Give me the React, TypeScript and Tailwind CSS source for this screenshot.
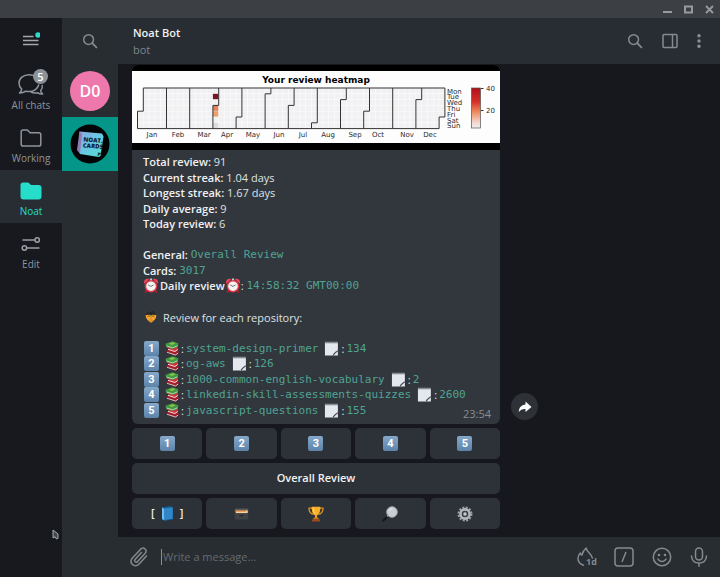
import type { ReactNode } from "react";

type EmojiProps = { className?: string };

function MenuIcon() {
  return (
    <svg width="18" height="16" viewBox="0 0 18 16" fill="none" aria-hidden="true">
      <path d="M1 5.5h10.5M1 9.5h15.5M1 13.5h15.5" stroke="#a2a7ab" strokeWidth="1.4" />
      <circle cx="16" cy="4" r="2.7" fill="#2bdccb" stroke="none" />
    </svg>
  );
}

function SearchIcon() {
  return (
    <svg width="16" height="16" viewBox="0 0 16 16" fill="none" stroke="#858a8e" strokeWidth="1.5" strokeLinecap="round" aria-hidden="true">
      <circle cx="6.6" cy="6.6" r="4.9" />
      <path d="M10.2 10.2l4.2 4.2" strokeWidth="1.8" />
    </svg>
  );
}

function ChatsIcon() {
  return (
    <svg width="26" height="22" viewBox="0 0 26 22" fill="none" stroke="#8f9499" strokeWidth="1.5" strokeLinejoin="round" strokeLinecap="round" aria-hidden="true">
      <path d="M15 1.4C13.7.9 12.3.8 10.9.8 5.400.8 1 4.300 1 9c0 2.400 1 4.500 2.700 6.100-.1 1.400-.9 2.800-2.200 4 2.200.1 4.500-.6 6.200-1.900 1.100.3 2.300.400 3.400.400 4.400 0 8.500-2.600 9.600-6.600" />
      <path d="M24.200 11.500c.5 1.800-.2 3.700-1.500 5.100 0 1.300.7 2.400 2 3.400-1.900.3-3.700-.2-5.200-1.300-2.200.6-4.500.5-6.300-.500" />
    </svg>
  );
}

function FolderIcon({ filled = false }: { filled?: boolean }) {
  return filled ? (
    <svg width="22" height="18" viewBox="0 0 22 18" fill="#26dccb" aria-hidden="true">
      <path d="M.5 3A2.500 2.500 0 0 1 3 .5h4.500c.9 0 1.500.4 2 1L11 3h7.500a3 3 0 0 1 3 3v8.500a3 3 0 0 1-3 3h-15a3 3 0 0 1-3-3z" />
    </svg>
  ) : (
    <svg width="22" height="18" viewBox="0 0 22 18" fill="none" stroke="#8f9499" strokeWidth="1.5" strokeLinejoin="round" aria-hidden="true">
      <path d="M1.200 2.800C1.200 1.700 2 1 3 1h4.400l2.700 2.800h8.700c1.200 0 2 .8 2 2v9.400c0 1.100-.8 1.900-2 1.900H3.200c-1.200 0-2-.8-2-1.900z" />
    </svg>
  );
}

function SlidersIcon() {
  return (
    <svg width="20" height="16" viewBox="0 0 20 16" fill="none" stroke="#9a9fa4" strokeWidth="1.500" aria-hidden="true">
      <path d="M1.500 4h12.500M6 12h12.500" />
      <circle cx="16.200" cy="4" r="2.200" />
      <circle cx="3.400" cy="12" r="2.200" />
    </svg>
  );
}

function PanelIcon() {
  return (
    <svg width="16" height="16" viewBox="0 0 16 16" fill="none" stroke="#858a8e" strokeWidth="1.500" aria-hidden="true">
      <rect x="1" y="1.500" width="14" height="13" rx="1" />
      <path d="M10.500 1.500v13" />
    </svg>
  );
}

function DotsIcon() {
  return (
    <svg width="4" height="16" viewBox="0 0 4 16" fill="#8b9094" aria-hidden="true">
      <circle cx="2" cy="2.700" r="1.700" />
      <circle cx="2" cy="8" r="1.700" />
      <circle cx="2" cy="13.300" r="1.700" />
    </svg>
  );
}

function ClipIcon() {
  return (
    <svg width="18" height="20" viewBox="0 0 18 20" fill="none" stroke="#858a8e" strokeWidth="1.500" strokeLinecap="round" aria-hidden="true">
      <path d="M11.500 5.500l-6.300 6.800c-1.600 1.800.7 4 2.400 2.300l7.400-8c3-3.500-1.400-7.400-4.600-4.200L2.600 10.700c-4.400 5 1.900 11 6.500 6.300l7.400-8" />
    </svg>
  );
}

function StreakIcon() {
  return (
    <svg width="20" height="20" viewBox="0 0 20 20" className="overflow-visible" fill="none" stroke="#858a8e" strokeWidth="1.500" strokeLinecap="round" strokeLinejoin="round" aria-hidden="true">
      <path d="M7.500 18.200C4.200 17.200 2 14.500 2 11.200c0-2.200 1-3.800 2.300-5.200.3 1 .7 1.700 1.500 2.200C6.600 5.500 7.600 3 10.200 1c.4 2.500 1.500 3.600 3 5 1.500 1.500 2.800 3 3.200 5" />
      <text x="10" y="18" fontFamily="Open Sans, sans-serif" fontSize="9" fontWeight="700" fill="#858a8e" stroke="none">1d</text>
    </svg>
  );
}

function CommandIcon() {
  return (
    <svg width="20" height="20" viewBox="0 0 20 20" fill="none" stroke="#858a8e" strokeWidth="1.500" strokeLinecap="round" aria-hidden="true">
      <rect x="1" y="1" width="18" height="18" rx="3" />
      <path d="M11.800 5.500L8.200 14.500" />
    </svg>
  );
}

function SmileIcon() {
  return (
    <svg width="20" height="20" viewBox="0 0 20 20" fill="none" stroke="#858a8e" strokeWidth="1.500" strokeLinecap="round" aria-hidden="true">
      <circle cx="10" cy="10" r="8.700" />
      <path d="M6 12c1.500 3.200 6.500 3.200 8 0" />
      <circle cx="7" cy="8" r="1.300" fill="#858a8e" stroke="none" />
      <circle cx="13" cy="8" r="1.300" fill="#858a8e" stroke="none" />
    </svg>
  );
}

function MicIcon() {
  return (
    <svg width="18" height="20" viewBox="0 0 18 20" fill="none" stroke="#858a8e" strokeWidth="1.500" strokeLinecap="round" aria-hidden="true">
      <rect x="5.500" y="1" width="7" height="12" rx="3.500" />
      <path d="M1.500 9c.3 4.400 3.300 7 7.500 7s7.200-2.600 7.500-7M9 16v3.200" />
    </svg>
  );
}

function AlarmEmoji({ className = "" }: EmojiProps) {
  return (
    <svg width="16" height="15" viewBox="0 0 16 16" className={className} role="img" aria-label="alarm clock">
      <path d="M3.500 13l-1.500 2.500M12.500 13l1.500 2.500" stroke="#b71c2e" strokeWidth="1.600" strokeLinecap="round" />
      <circle cx="8" cy="8.700" r="6.700" fill="#e2374a" />
      <path d="M.6 6C-.3 2.500 2.800-.3 6 1.200zM15.400 6c.9-3.500-2.200-6.300-5.400-4.800z" fill="#f0445a" />
      <path d="M6.800.5h2.400v2H6.800z" fill="#c2c7cc" />
      <circle cx="8" cy="8.700" r="5.100" fill="#f3f3f1" />
      <path d="M5 7.400L8 9l2.800-1.800" stroke="#6b6f74" strokeWidth="1" fill="none" />
    </svg>
  );
}

function BooksEmoji({ className = "" }: EmojiProps) {
  return (
    <svg width="14" height="15" viewBox="0 0 14 15" className={className} role="img" aria-label="books">
      <path d="M1 10.500l9.500 4.200 3-2.400v-2.300L5 7z" fill="#a51d2c" />
      <path d="M2 11.300l8.500 2.700 2.600-1.900" stroke="#ece6df" strokeWidth=".8" fill="none" />
      <path d="M1.500 6.500L10 11.300l3-2.300V6L5 4z" fill="#d2303c" />
      <path d="M3 8.300l6.800 2.200 3-2" stroke="#f4f0ec" strokeWidth=".9" fill="none" />
      <path d="M.5 2.800L7.500.3l5.800 2-.5 3.400-5.300 2.200L1 5.600z" fill="#3f9a43" />
      <path d="M1.500 5l6 1.800 5-2" stroke="#dfe9d2" strokeWidth=".7" fill="none" />
      <path d="M3.600 2.700l4-1.500 3 1.100-3.600 1.600z" fill="#8bc34a" />
    </svg>
  );
}

function NoteEmoji({ className = "" }: EmojiProps) {
  return (
    <svg width="15" height="15" viewBox="0 0 15 16" className={className} role="img" aria-label="notepad">
      <path d="M.5 1.500h13.800v8.700l-4.800 5.300h-9z" fill="#e4e8ee" />
      <path d="M.5.8h13.800v1.500H.5z" fill="#777d85" />
      <path d="M.5 1.400h13.800" stroke="#a7adb5" strokeWidth=".8" strokeDasharray="1 1" />
      <path d="M9.500 15.500c1.500-2.800 3-3.400 4.800-5.300v5.300z" fill="#e4e8ee" />
      <path d="M9.300 15.200c.8-2.500 2.800-2.900 4.900-5" stroke="#454b52" strokeWidth="1.200" fill="none" />
    </svg>
  );
}

function MaskEmoji({ className = "" }: EmojiProps) {
  return (
    <svg width="12" height="14" viewBox="0 0 14 14" className={className} role="img" aria-label="mascot">
      <path d="M1.500 5c.5-2.800 1.500-3.500 3.500-3.500L9.500 0l1 1.500C12 2 12.300 3.500 12.500 5l-1 2h-9z" fill="#24282c" />
      <path d="M.7 5c1.800-.6 3.300-1 4.800-.5L7 5.500l1.500-1c1.500-.5 3-.1 4.800.5C13.300 8.500 10.700 12 7 13.700 3.300 12 .7 8.500.7 5z" fill="#f3a72e" />
      <path d="M3 6.500c1-1.200 2.200-1 3 .2M8 6.700c.8-1.200 2-1.400 3-.2" stroke="#6d3f14" strokeWidth="1" fill="none" />
      <path d="M7 7.500v3M4.500 10.500L7 12l2.500-1.500" stroke="#d0761a" strokeWidth="1" fill="none" />
    </svg>
  );
}

function BlueBookEmoji() {
  return (
    <svg width="13" height="15" viewBox="0 0 13 15" role="img" aria-label="blue book">
      <path d="M1 1.500L9.800 0l2.200 1.800v11.400L3.200 15 1 13z" fill="#15609b" />
      <path d="M3 2.500l8.700-1v11.300l-8.500 1.300z" fill="#2f86c8" />
      <path d="M1 1.500l2 1.300.2 11.500L1 13z" fill="#72bdee" />
    </svg>
  );
}

function CardBoxEmoji() {
  return (
    <svg width="15" height="12" viewBox="0 0 15 12" role="img" aria-label="card box">
      <path d="M1 .5h13l.5 3H.5z" fill="#55595d" />
      <path d="M1.500 2.300h12.200V5.500H1.500z" fill="#e98b48" />
      <path d="M2 3.700h9.500l1-1.200h1V5H2z" fill="#f4d2a4" />
      <path d="M.5 5.200h14L14 11.500H1z" fill="#3f4346" />
      <path d="M5.500 7h4v1.200h-4z" fill="#24272a" />
    </svg>
  );
}

function TrophyEmoji() {
  return (
    <svg width="16" height="16" viewBox="0 0 16 16" role="img" aria-label="trophy">
      <path d="M4 2.200H1c0 3.300 1.500 5.500 4.500 6.200M12 2.200h3c0 3.300-1.500 5.500-4.500 6.200" fill="none" stroke="#d9921c" strokeWidth="1.300" />
      <path d="M3.600.8h8.800c0 4.900-1 7.400-3.500 8.700v2.600H7.100V9.500C4.600 8.200 3.600 5.700 3.600.8z" fill="#f6b02c" />
      <path d="M5.300 2c.1 2.600.6 4.200 1.500 5.300" stroke="#ffe08a" strokeWidth="1" fill="none" />
      <path d="M5.800 11.500h4.400l.8 2H5z" fill="#c97a15" />
      <path d="M4 13.300h8v2.200H4z" fill="#9c4a1c" />
    </svg>
  );
}

function LensEmoji() {
  return (
    <svg width="16" height="16" viewBox="0 0 16 16" role="img" aria-label="magnifier">
      <path d="M1.300 14.500l5.200-5" stroke="#15181b" strokeWidth="2.400" strokeLinecap="round" />
      <path d="M5 10.500l1.600-1.500" stroke="#9da3a8" strokeWidth="1.400" />
      <circle cx="10" cy="6" r="5.300" fill="#c9ced3" stroke="#a2a8ad" strokeWidth="1" />
      <path d="M7 5c.6-1.600 2-2.300 3.500-2.300" stroke="#eef1f3" strokeWidth="1" fill="none" />
    </svg>
  );
}

function GearEmoji() {
  return (
    <svg width="16" height="16" viewBox="0 0 16 16" role="img" aria-label="settings">
      <circle cx="8" cy="8" r="6.500" fill="none" stroke="#9ba1a7" strokeWidth="2" strokeDasharray="2 1.400" />
      <circle cx="8" cy="8" r="4.600" fill="none" stroke="#b4b9be" strokeWidth="2.600" />
      <circle cx="8" cy="8" r="2.900" fill="#44494e" />
      <circle cx="8" cy="8" r="1.700" fill="#c4c9cd" />
    </svg>
  );
}

function Keycap({ n }: { n: number }) {
  return (
    <span className="inline-flex h-[15px] w-[15px] items-center justify-center rounded-[2px] bg-linear-to-b from-[#86a9ca] to-[#5c83aa] font-['Roboto',sans-serif] text-[11px] leading-none font-bold text-white">
      {n}
    </span>
  );
}

const MONTHS = [
  { name: "Jan", start: 0, x: 20 },
  { name: "Feb", start: 31, x: 46 },
  { name: "Mar", start: 59, x: 72 },
  { name: "Apr", start: 90, x: 95 },
  { name: "May", start: 120, x: 121 },
  { name: "Jun", start: 151, x: 147 },
  { name: "Jul", start: 181, x: 171 },
  { name: "Aug", start: 212, x: 196 },
  { name: "Sep", start: 243, x: 223 },
  { name: "Oct", start: 273, x: 246 },
  { name: "Nov", start: 304, x: 275 },
  { name: "Dec", start: 334, x: 298 },
];
const DAYS = ["Mon", "Tue", "Wed", "Thu", "Fri", "Sat", "Sun"];
const FIRST_WEEKDAY = 4;
const LEFT = 5.5;
const TOP = 17;
const CELL = 5.8;

function gx(week: number) {
  return LEFT + week * CELL;
}
function gy(row: number) {
  return TOP + row * CELL;
}

function Heatmap() {
  const cells: { w: number; r: number }[] = [];
  for (let d = 0; d < 365; d++) {
    cells.push({ w: Math.floor((d + FIRST_WEEKDAY) / 7), r: (d + FIRST_WEEKDAY) % 7 });
  }
  const borders = MONTHS.slice(1)
    .map((m) => {
      const w = Math.floor((m.start + FIRST_WEEKDAY) / 7);
      const r = (m.start + FIRST_WEEKDAY) % 7;
      return r === 0
        ? `M${gx(w)} ${gy(0)}V${gy(7)}`
        : `M${gx(w + 1)} ${gy(0)}V${gy(r)}H${gx(w)}V${gy(7)}`;
    })
    .join("");
  return (
    <svg viewBox="0 0 368 72" className="block w-full bg-[#fdfdfd]" role="img" aria-label="Your review heatmap" fontFamily="DejaVu Sans, sans-serif" fontSize="7" fill="#2c2c2c">
      <defs>
        <linearGradient id="scale" x1="0" y1="0" x2="0" y2="1">
          <stop offset="0" stopColor="#b01018" />
          <stop offset=".35" stopColor="#d5302a" />
          <stop offset=".6" stopColor="#ee8a5c" />
          <stop offset=".85" stopColor="#f3d3cc" />
          <stop offset="1" stopColor="#eeeeee" />
        </linearGradient>
      </defs>
      <text x="184" y="12" fontSize="9" fontWeight="700" textAnchor="middle" fill="#000">Your review heatmap</text>
      {cells.map((c) => (
        <rect key={`${c.w}-${c.r}`} x={gx(c.w)} y={gy(c.r)} width={CELL} height={CELL} fill="#f1f0f2" stroke="#f9f9f9" strokeWidth=".7" />
      ))}
      <rect x={gx(13)} y={gy(1)} width="5.400" height="5.400" fill="#7a1526" />
      <rect x={gx(13)} y={gy(3)} width="5.400" height="5.400" fill="#e5805a" />
      <rect x={gx(13)} y={gy(4)} width="5.400" height="5.400" fill="#ee9f6c" />
      <rect x={gx(13)} y={gy(6)} width="5.400" height="5.400" fill="#dedbdd" />
      <path
        d={`M${gx(1)} ${gy(0)}H${gx(53)}V${gy(5)}H${gx(52)}V${gy(7)}H${gx(0)}V${gy(4)}H${gx(1)}Z${borders}`}
        fill="none"
        stroke="#333"
        strokeWidth="1"
      />
      {MONTHS.map((m) => (
        <text key={m.name} x={m.x} y="66" textAnchor="middle">{m.name}</text>
      ))}
      {DAYS.map((d, i) => (
        <text key={d} x="315" y={gy(i) + 5.500}>{d}</text>
      ))}
      <rect x="339.500" y="17" width="9" height="40" fill="url(#scale)" stroke="#555" strokeWidth=".7" />
      <path d="M349 17.500h2.500M349 39.500h2.500" stroke="#333" strokeWidth="1" />
      <text x="354" y="20">40</text>
      <text x="354" y="42">20</text>
    </svg>
  );
}

function NoatAvatar() {
  return (
    <svg width="40" height="40" viewBox="0 0 40 40" role="img" aria-label="Noat Cards">
      <defs>
        <linearGradient id="card" x1="0" y1="0" x2="1" y2="1">
          <stop offset="0" stopColor="#8ea9e4" />
          <stop offset=".5" stopColor="#65c8e4" />
          <stop offset="1" stopColor="#55dfc8" />
        </linearGradient>
      </defs>
      <circle cx="20" cy="20" r="19.500" fill="#020304" />
      <path d="M9.500 7.500L32 9.500l1.500 3-3 19.500-2 1L10 30z" fill="url(#card)" />
      <path d="M9.500 7.500L7 26l3 4 2-20z" fill="#8f7cb5" />
      <path d="M27.500 32.500l.5-4 3.500.500z" fill="#163c48" />
      <g transform="rotate(4 20 20)" fontFamily="Open Sans, sans-serif" fontSize="6" fontWeight="800" fill="#102033">
        <text x="13" y="18">NOAT.</text>
        <text x="13" y="24">CARDS</text>
      </g>
    </svg>
  );
}

function NavItem({ label, icon, active = false, badge }: { label: string; icon: ReactNode; active?: boolean; badge?: number }) {
  return (
    <button
      className={`flex h-[53px] w-full flex-col items-center pt-2 text-[10px] leading-[14px] ${active ? "bg-[#282d33] text-[#26dccb]" : "text-[#8f9499]"}`}
    >
      <span className="relative flex h-[25px] items-center justify-center">
        {icon}
        {badge !== undefined && (
          <span className="absolute -top-[3px] -right-1 flex h-[15px] w-[15px] items-center justify-center rounded-full bg-[#8d9298] text-[11px] leading-none font-semibold text-white">
            {badge}
          </span>
        )}
      </span>
      <span className="mt-px">{label}</span>
    </button>
  );
}

function Label({ children }: { children: ReactNode }) {
  return <b className="font-semibold text-[#f0f1f2]">{children}</b>;
}

function Code({ children }: { children: ReactNode }) {
  return <code className="font-['DejaVu_Sans_Mono',monospace] text-[11px] text-[#4fa393]">{children}</code>;
}

function Line({ children }: { children?: ReactNode }) {
  return <div className="flex items-center whitespace-pre">{children}</div>;
}

const STATS = [
  ["Total review", "91"],
  ["Current streak", "1.04 days"],
  ["Longest streak", "1.67 days"],
  ["Daily average", "9"],
  ["Today review", "6"],
];

const REPOS = [
  ["system-design-primer", "134"],
  ["og-aws", "126"],
  ["1000-common-english-vocabulary", "2"],
  ["linkedin-skill-assessments-quizzes", "2600"],
  ["javascript-questions", "155"],
];

function Message() {
  return (
    <article className="relative w-full max-w-[368px] overflow-hidden rounded-[6px] bg-[#32373d]">
      <div className="bg-black pt-[6px] pb-[7px]">
        <Heatmap />
      </div>
      <div className="grid min-h-[274px] auto-rows-fr px-[11px] pt-[4px] pb-[6px] text-[11px] leading-[15px] text-[#dfe2e4]">
        {STATS.map(([k, v]) => (
          <Line key={k}>
            <Label>{k}:</Label>
            <span>{` ${v}`}</span>
          </Line>
        ))}
        <Line />
        <Line>
          <Label>{"General: "}</Label>
          <Code>Overall Review</Code>
        </Line>
        <Line>
          <Label>{"Cards: "}</Label>
          <Code>3017</Code>
        </Line>
        <Line>
          <AlarmEmoji className="mr-px" />
          <Label>Daily review</Label>
          <AlarmEmoji />
          <span>{": "}</span>
          <Code>14:58:32 GMT00:00</Code>
        </Line>
        <Line />
        <Line>
          <MaskEmoji className="mr-[6px] ml-[2px]" />
          <span>Review for each repository:</span>
        </Line>
        <Line />
        {REPOS.map(([name, count], i) => (
          <Line key={name}>
            <span className="mr-[6px] ml-px flex">
              <Keycap n={i + 1} />
            </span>
            <BooksEmoji />
            <span className="flex w-[7px] justify-center">:</span>
            <Code>{name}</Code>
            <NoteEmoji className="ml-[6px]" />
            <span className="flex w-[7px] justify-center">:</span>
            <Code>{count}</Code>
          </Line>
        ))}
      </div>
      <time className="absolute right-[9px] bottom-[3px] text-[11px] leading-[15px] text-[#888d92]">23:54</time>
    </article>
  );
}

const KEY =
  "flex h-[31px] items-center justify-center rounded-[5px] bg-[#2d3238] text-[11px] font-semibold text-[#f2f3f4]";

function Keyboard() {
  return (
    <div className="mt-1 grid w-full max-w-[368px] grid-cols-5 gap-1">
      {[1, 2, 3, 4, 5].map((n) => (
        <button key={n} className={KEY}>
          <Keycap n={n} />
        </button>
      ))}
      <button className={`${KEY} col-span-5`}>Overall Review</button>
      <button className={`${KEY} gap-[6px]`}>
        <span>[</span>
        <BlueBookEmoji />
        <span>]</span>
      </button>
      <button className={KEY}><CardBoxEmoji /></button>
      <button className={KEY}><TrophyEmoji /></button>
      <button className={KEY}><LensEmoji /></button>
      <button className={KEY}><GearEmoji /></button>
    </div>
  );
}

export default function App() {
  return (
    <div className="relative flex h-screen flex-col overflow-hidden bg-[#17181d] font-['Open_Sans',sans-serif]">
      <div className="flex h-[18px] shrink-0 items-center justify-end gap-3 bg-[#3c4045] pr-[6px]">
        <button aria-label="Minimize">
          <svg width="9" height="10" viewBox="0 0 9 10"><path d="M0 8h9" stroke="#989b9e" strokeWidth="2" /></svg>
        </button>
        <button aria-label="Maximize">
          <svg width="9" height="9" viewBox="0 0 9 9"><rect x="1" y="1.500" width="7" height="6" fill="none" stroke="#989b9e" strokeWidth="2" /></svg>
        </button>
        <button aria-label="Close">
          <svg width="9" height="9" viewBox="0 0 9 9"><path d="M1 1l7 7M8 1L1 8" stroke="#989b9e" strokeWidth="1.800" /></svg>
        </button>
      </div>

      <div className="flex min-h-0 flex-1">
        <nav className="w-[62px] shrink-0 bg-[#17191f]">
          <button aria-label="Menu" className="flex h-[46px] w-full items-center justify-center pb-[4px]">
            <MenuIcon />
          </button>
          <NavItem label="All chats" icon={<ChatsIcon />} badge={5} />
          <NavItem label="Working" icon={<FolderIcon />} />
          <NavItem label="Noat" icon={<FolderIcon filled />} active />
          <NavItem label="Edit" icon={<SlidersIcon />} />
        </nav>

        <aside className="w-[56px] shrink-0 bg-[#282d32]">
          <button aria-label="Search chats" className="flex h-[46px] w-full items-center justify-center">
            <SearchIcon />
          </button>
          <button className="flex h-[53px] w-full items-center justify-center">
            <span className="flex h-10 w-10 items-center justify-center rounded-full bg-[#ee77ab] text-[16px] font-semibold text-white">D0</span>
          </button>
          <button className="flex h-[54px] w-full items-center justify-center bg-[#049688]">
            <NoatAvatar />
          </button>
        </aside>

        <main className="flex min-w-0 flex-1 flex-col">
          <header className="flex h-[46px] shrink-0 items-center bg-[#282d33] pr-[19px] pl-[15px]">
            <div className="flex-1">
              <h1 className="text-[11px] leading-[17px] font-semibold text-[#f0f1f2]">Noat Bot</h1>
              <p className="text-[11px] leading-[17px] text-[#7f8488]">bot</p>
            </div>
            <div className="flex items-center gap-[19px]">
              <button aria-label="Search in chat"><SearchIcon /></button>
              <button aria-label="Toggle info panel"><PanelIcon /></button>
              <button aria-label="More"><DotsIcon /></button>
            </div>
          </header>

          <section className="flex min-h-0 flex-1 flex-col justify-end px-[14px] pb-2">
            <div className="flex items-end gap-[11px]">
              <Message />
              <button aria-label="Forward" className="mb-1 flex h-[27px] w-[27px] shrink-0 items-center justify-center rounded-full bg-[#2e3237]">
                <svg width="14" height="12" viewBox="0 0 14 12" fill="#fff" aria-hidden="true">
                  <path d="M7.500.5L13.500 6l-6 5V8C4.500 7.800 2.500 8.800.8 11 .9 6.800 3.300 3.800 7.500 3.500z" />
                </svg>
              </button>
            </div>
            <Keyboard />
          </section>

          <form className="flex h-10 shrink-0 items-center bg-[#282d32] pr-3 pl-3" onSubmit={(e) => e.preventDefault()}>
            <button type="button" aria-label="Attach" className="mr-[13px]"><ClipIcon /></button>
            <input
              aria-label="Message"
              placeholder="Write a message..."
              className="h-4 min-w-0 flex-1 border-l border-[#8b9094] bg-transparent pl-px text-[11px] leading-4 text-white outline-none placeholder:text-[#666b70]"
            />
            <div className="flex items-center gap-[18px]">
              <button type="button" aria-label="Auto-delete after one day"><StreakIcon /></button>
              <button type="button" aria-label="Commands"><CommandIcon /></button>
              <button type="button" aria-label="Emoji"><SmileIcon /></button>
              <button type="button" aria-label="Record voice"><MicIcon /></button>
            </div>
          </form>
        </main>
      </div>

      <svg width="7" height="11" viewBox="0 0 7 11" className="pointer-events-none absolute top-[529px] left-[52px]" aria-hidden="true">
        <path d="M1 1v8l2-1.300L4.500 10 6 9.300V5z" fill="#44474b" stroke="#a7aaad" strokeWidth="1" />
      </svg>
    </div>
  );
}
